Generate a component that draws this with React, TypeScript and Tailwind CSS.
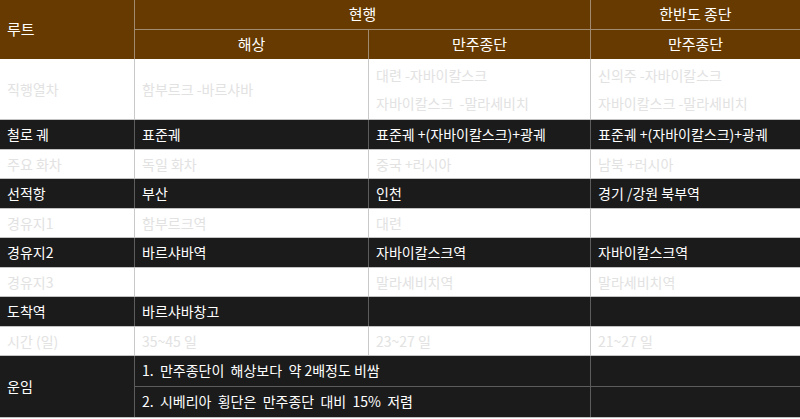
import React from 'react';

type Cell = string | string[];

interface RowData {
  label: string;
  cells: [Cell, Cell, Cell];
  dark: boolean;
  tall?: boolean;
}

const rows: RowData[] = [
  {
    label: '직행열차',
    cells: ['함부르크 -바르샤바', ['대련 -자바이칼스크', '자바이칼스크  -말라세비치'], ['신의주 -자바이칼스크', '자바이칼스크 -말라세비치']],
    dark: false,
    tall: true,
  },
  { label: '철로 궤', cells: ['표준궤', '표준궤 +(자바이칼스크)+광궤', '표준궤 +(자바이칼스크)+광궤'], dark: true },
  { label: '주요 화차', cells: ['독일 화차', '중국 +러시아', '남북 +러시아'], dark: false },
  { label: '선적항', cells: ['부산', '인천', '경기 /강원 북부역'], dark: true },
  { label: '경유지1', cells: ['함부르크역', '대련', ''], dark: false },
  { label: '경유지2', cells: ['바르샤바역', '자바이칼스크역', '자바이칼스크역'], dark: true },
  { label: '경유지3', cells: ['', '말라세비치역', '말라세비치역'], dark: false },
  { label: '도착역', cells: ['바르샤바창고', '', ''], dark: true },
  { label: '시간 (일)', cells: ['35~45 일', '23~27 일', '21~27 일'], dark: false },
];

const cols = 'grid grid-cols-[135px_234px_222px_209px]';

const DataRow: React.FC<{ row: RowData }> = ({ row }) => {
  const bg = row.dark ? 'bg-[#1b1b1b] text-white' : 'bg-white text-[#e2e2e2]';
  const line = row.dark ? 'border-[#5c5c5c]' : 'border-[#c9c9c9]';
  const h = row.tall ? 'h-[61px]' : 'h-[29.5px]';
  const all = [row.label, ...row.cells];
  return (
    <div className={`${cols} ${h} ${bg} border-b border-b-[#c3c3c3]`}>
      {all.map((c, i) => (
        <div
          key={i}
          className={`flex flex-col justify-center px-[7px] whitespace-pre ${i < 3 ? `border-r ${line}` : ''}`}
        >
          {Array.isArray(c) ? (
            c.map((t) => (
              <div key={t} className="leading-[28px]">
                {t}
              </div>
            ))
          ) : (
            <div className="leading-[20px]">{c}</div>
          )}
        </div>
      ))}
    </div>
  );
};

export default function App() {
  return (
    <div
      className="w-[800px] h-[419px] bg-white overflow-hidden text-[14px]"
      style={{ fontFamily: '"Noto Sans CJK KR", "Noto Sans", sans-serif' }}
    >
      {/* header */}
      <div className={`${cols} grid-rows-[29.5px_29.5px] bg-[#663a00] text-white text-[15px]`}>
        <div className="row-span-2 flex items-center px-[7px] border-r border-[#a08a70]">루트</div>
        <div className="col-span-2 flex items-center justify-center border-r border-b border-[#a08a70]">현행</div>
        <div className="flex items-center justify-center border-b border-[#a08a70]">한반도 종단</div>
        <div className="flex items-center justify-center border-r border-[#a08a70]">해상</div>
        <div className="flex items-center justify-center border-r border-[#a08a70]">만주종단</div>
        <div className="flex items-center justify-center">만주종단</div>
      </div>

      {rows.map((r) => (
        <DataRow key={r.label} row={r} />
      ))}

      {/* 운임 */}
      <div className={`${cols} grid-rows-[30.5px_30.5px] bg-[#1b1b1b] text-white border-b border-[#c3c3c3]`}>
        <div className="row-span-2 flex items-center px-[7px] border-r border-[#5c5c5c]">운임</div>
        <div className="col-span-2 flex items-center px-[7px] whitespace-pre border-r border-b border-[#5c5c5c]">
          1.  만주종단이  해상보다  약 2배정도 비쌈
        </div>
        <div className="border-b border-[#5c5c5c]"></div>
        <div className="col-span-2 flex items-center px-[7px] whitespace-pre border-r border-[#5c5c5c]">
          2.  시베리아  횡단은  만주종단  대비  15%  저렴
        </div>
        <div></div>
      </div>
    </div>
  );
}
